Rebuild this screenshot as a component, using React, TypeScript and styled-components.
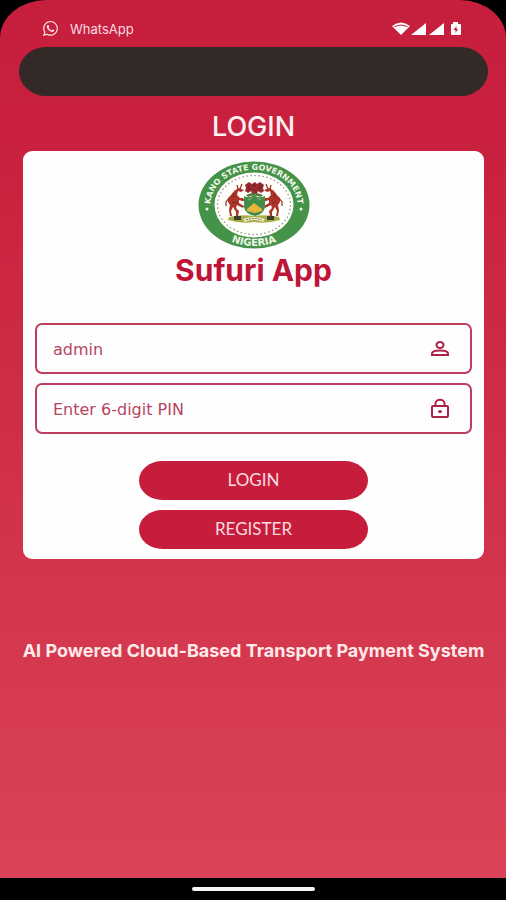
import React from "react";
import styled, { createGlobalStyle } from "styled-components";
import { FaWhatsapp } from "react-icons/fa";

const GlobalStyle = createGlobalStyle`
  * { box-sizing: border-box; }
  html, body, #root { height: 100%; }
  body { margin: 0; background: #000; font-family: Inter, "Open Sans", sans-serif; }
`;

const Device = styled.div`
  display: flex;
  flex-direction: column;
  min-height: 100%;
  background: #000;
`;

const Screen = styled.main`
  flex: 1;
  display: flex;
  flex-direction: column;
  padding: 0 18px 0 19px;
  background: linear-gradient(#c61f3d 0%, #c8203e 15%, #da4357 100%);
  border-radius: 46px 46px 0 0 / 38px 38px 0 0;
`;

const StatusBar = styled.header`
  display: flex;
  align-items: center;
  justify-content: space-between;
  height: 47px;
  padding: 10px 26px 0 23px;
  color: #fbdce2;
`;

const Source = styled.div`
  display: flex;
  align-items: center;
  gap: 11px;
  font-size: 13px;
`;

const Banner = styled.div`
  height: 49px;
  border-radius: 28px / 25px;
  background: #332a28;
`;

const Title = styled.h1`
  margin: 13px 0 7px;
  color: #fff0f0;
  font: 500 27px/35px Inter, sans-serif;
  text-align: center;
`;

const Card = styled.form`
  display: flex;
  flex-direction: column;
  align-items: center;
  margin: 0 4px;
  padding: 10px 12px;
  background: #fffefe;
  border-radius: 9px;
`;

const AppName = styled.h2`
  margin: 3px 0 35px;
  color: #bd1438;
  font: 700 30px/36px Inter, sans-serif;
`;

const Fields = styled.div`
  display: flex;
  flex-direction: column;
  gap: 9px;
  width: 100%;
  margin-bottom: 27px;
`;

const Field = styled.label`
  display: flex;
  align-items: center;
  height: 51px;
  padding: 0 18px 0 16px;
  border: 2px solid #bd3e5e;
  border-radius: 7px;
  color: #ad2449;
`;

const Input = styled.input`
  flex: 1;
  min-width: 0;
  padding: 2px 0 0;
  border: 0;
  outline: 0;
  background: transparent;
  color: #b64462;
  font: 400 16px/20px "DejaVu Sans", sans-serif;
  &::placeholder { color: #b64462; opacity: 1; }
`;

const Actions = styled.div`
  display: flex;
  flex-direction: column;
  gap: 10px;
  width: 229px;
  max-width: 100%;
`;

const Action = styled.button`
  height: 39px;
  padding: 0 0 2px;
  border: 0;
  border-radius: 24px / 20px;
  background: #c51d3b;
  color: #fbdbe0;
  font: 400 17px/20px Lato, sans-serif;
  cursor: pointer;
`;

const Tagline = styled.p`
  margin: 80px 0 0;
  color: #ffe9e9;
  font: 700 18px/24px Inter, sans-serif;
  text-align: center;
  white-space: nowrap;
  align-self: center;
`;

const NavigationBar = styled.footer`
  display: flex;
  align-items: center;
  justify-content: center;
  height: 22px;
`;

const HomeHandle = styled.div`
  width: 123px;
  height: 4px;
  border-radius: 2px;
  background: #f5f5f5;
`;

const StatusIcons = () => (
  <svg width="70" height="14" viewBox="0 0 70 14" fill="#fff" role="img" aria-label="Wi-Fi, signal and battery">
    <path d="M0 4Q9 -3 18 4L9 13Z" />
    <path d="M2.5 4.5Q9 1.5 15.5 4.5" fill="none" stroke="#c61f3d" strokeWidth="1" />
    <path d="M19 13L34 1V13ZM37 13L52 1V13Z" />
    <path d="M61 0h5v2h2q1 0 1 1v9q0 1-1 1h-8q-1 0-1-1V3q0-1 1-1h1Z" />
    <path d="M64.5 4L61.5 8H63.5V11L66 7H64.5Z" fill="#c61f3d" />
  </svg>
);

const PersonIcon = () => (
  <svg width="24" height="24" viewBox="0 0 24 24" fill="none" stroke="currentColor" strokeWidth="2" aria-hidden="true">
    <ellipse cx="12" cy="8" rx="3.5" ry="3" />
    <path d="M4 18V16.5C4 14.5 8 13.5 12 13.5S20 14.5 20 16.5V18Z" />
  </svg>
);

const LockIcon = () => (
  <svg width="24" height="24" viewBox="0 0 24 24" fill="none" stroke="currentColor" strokeWidth="2" aria-hidden="true">
    <rect x="4" y="9" width="16" height="11" rx="1" />
    <path d="M7.5 9V6.5C7.500 1.500 16.500 1.500 16.500 6.500V9" />
    <ellipse cx="12" cy="14.500" rx="2" ry="1.600" fill="currentColor" stroke="none" />
  </svg>
);

const Horse = () => (
  <g>
    <path d="M46 29L43 31L40 30L39 34L42 37L45 37L47 40L44 40L41 39L41 42L46 45L45 47L39 44L38 47L41 50L40 55H38L38 51L35 46L33 50L34 55H32L31 49L32 44L30 41L30 37L33 34L36 30L39 28L41 27Z" fill="#ad3527" />
    <path d="M40 28L39 24M42 28L44 23M31 37L28 41V45" fill="none" stroke="#8d3023" strokeWidth="1.2" />
    <path d="M36 32L35 37M34 41L38 42" fill="none" stroke="#78251c" strokeWidth="1" />
  </g>
);

const Seal = () => (
  <svg width="112" height="88" viewBox="0 0 112 88" role="img" aria-label="Kano State Government, Nigeria">
    <defs>
      <path id="seal-top" d="M13.7 52A43.5 35 0 1 1 98.3 52" />
      <path id="seal-bottom" d="M6 44A50 41 0 0 0 106 44" />
    </defs>
    <ellipse cx="56" cy="44" rx="55.5" ry="43.5" fill="#459348" />
    <ellipse cx="56" cy="44" rx="39.5" ry="32.5" fill="#fffefa" />
    <ellipse cx="56" cy="44" rx="36.5" ry="29.5" fill="none" stroke="#87938a" strokeWidth="1.2" strokeDasharray="1.5 2.5" />
    <text fill="#f0f7e8" fontFamily="DejaVu Sans, sans-serif" fontSize="8" fontWeight="700" textAnchor="middle">
      <textPath href="#seal-top" startOffset="50%">KANO STATE GOVERNMENT</textPath>
    </text>
    <text fill="#f0f7e8" fontFamily="DejaVu Sans, sans-serif" fontSize="10" fontWeight="700" textAnchor="middle">
      <textPath href="#seal-bottom" startOffset="50%">NIGERIA</textPath>
    </text>
    <circle cx="9" cy="48" r="1.5" fill="#eef6dc" />
    <circle cx="103" cy="48" r="1.5" fill="#eef6dc" />
    <path d="M31 56Q43 53 56 55Q70 53 81 56L82 59Q69 63 56 61Q43 63 30 59Z" fill="#a7ac45" />
    <path d="M36 55h7v4h-7ZM69 55h7v4h-7Z" fill="#38402c" />
    <path d="M45 58Q56 54 67 58L65 61Q56 57 47 61Z" fill="#ece8c6" />
    <path d="M48 59Q56 56 64 59" fill="none" stroke="#77805c" strokeWidth="1" strokeDasharray="2 1" />
    <Horse />
    <g transform="translate(112 0) scale(-1 1)"><Horse /></g>
    <path d="M54 23L51 21L47 24L48 27L47 30L50 32L53 30L54 33H59L60 30L63 32L66 30L65 27L66 24L62 21L59 23L57 21Z" fill="#98292d" />
    <path d="M50 24L52 29M63 24L61 29M55 24L58 25" stroke="#512c28" strokeWidth="1" />
    <path d="M48 34Q56 30 65 34L63 36Q56 33 50 36Z" fill="#56783a" />
    <path d="M46 35Q51 38 56 34Q61 38 67 35V46Q66 53 57 55Q47 53 46 46Z" fill="#438d4b" />
    <path d="M49 48L56 42L64 48V50L57 52L49 50Z" fill="#e5b63a" />
    <path d="M50 39L54 37M59 37L63 39" stroke="#91b57c" />
  </svg>
);

export default function App() {
  return (
    <Device>
      <GlobalStyle />
      <Screen>
        <StatusBar>
          <Source><FaWhatsapp size={17} aria-hidden="true" />WhatsApp</Source>
          <StatusIcons />
        </StatusBar>
        <Banner />
        <Title>LOGIN</Title>
        <Card onSubmit={(event) => event.preventDefault()}>
          <Seal />
          <AppName>Sufuri App</AppName>
          <Fields>
            <Field>
              <Input type="text" aria-label="Username" defaultValue="admin" autoComplete="username" />
              <PersonIcon />
            </Field>
            <Field>
              <Input type="password" inputMode="numeric" maxLength={6} aria-label="Enter 6-digit PIN" placeholder="Enter 6-digit PIN" />
              <LockIcon />
            </Field>
          </Fields>
          <Actions>
            <Action type="submit">LOGIN</Action>
            <Action type="button">REGISTER</Action>
          </Actions>
        </Card>
        <Tagline>AI Powered Cloud-Based Transport Payment System</Tagline>
      </Screen>
      <NavigationBar><HomeHandle /></NavigationBar>
    </Device>
  );
}
